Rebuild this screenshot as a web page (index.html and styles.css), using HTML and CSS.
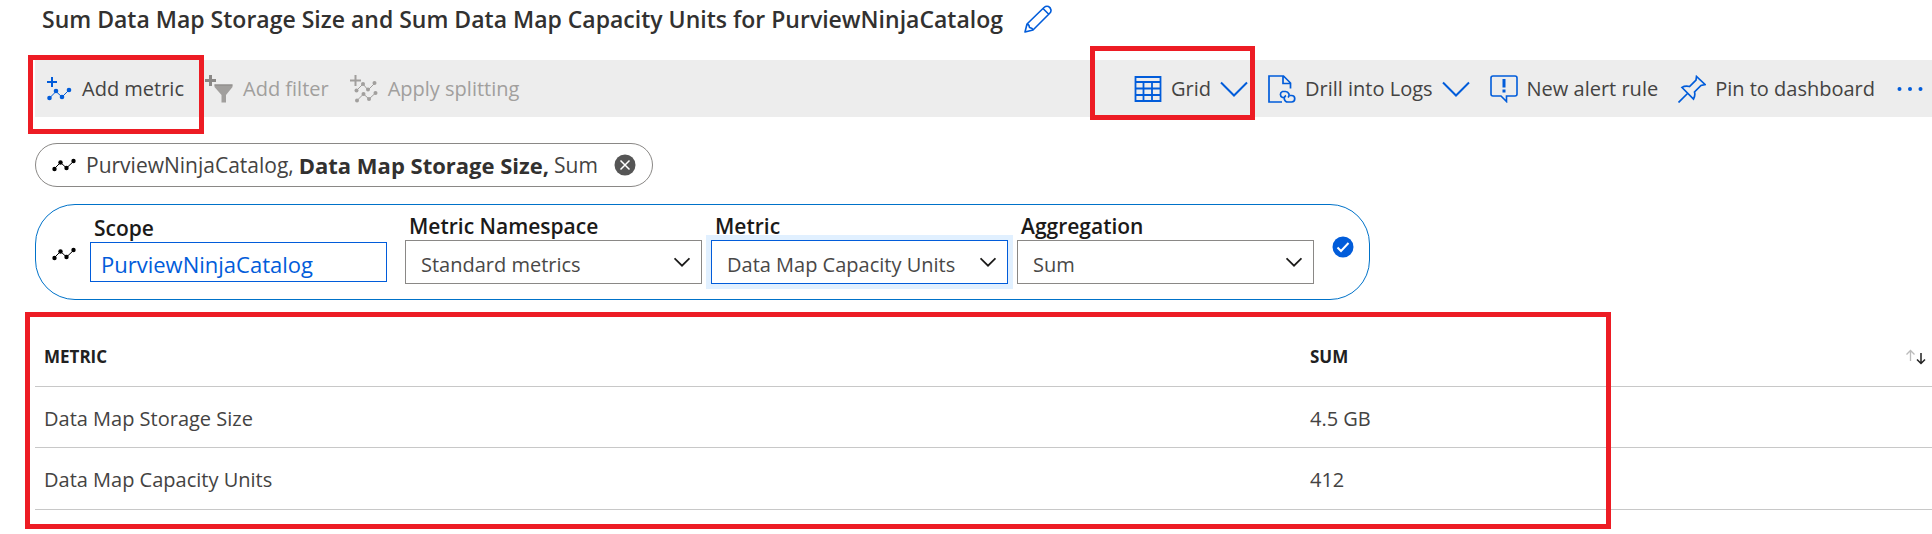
FILE: index.html
```html
<!DOCTYPE html>
<html lang="en">
<head>
<meta charset="utf-8">
<title>Metrics</title>
<link rel="stylesheet" href="styles.css">
</head>
<body>
<svg class="defs" aria-hidden="true">
  <symbol id="line" viewBox="0 0 24 14">
    <path d="M2 11 8.500 4.500 14.500 10 22 3" fill="none" stroke="currentColor" stroke-width="1"/>
    <g fill="currentColor"><circle cx="2.500" cy="11" r="2.200"/><circle cx="8.500" cy="4.500" r="2.200"/><circle cx="14.500" cy="10" r="2.200"/><circle cx="21.500" cy="3" r="2.200"/></g>
  </symbol>
  <symbol id="chev" viewBox="0 0 28 16"><path d="M1 1.500 14 14.500 27 1.500" fill="none" stroke="currentColor"/></symbol>
</svg>
<main class="page">
  <header class="title">
    <h1>Sum Data Map Storage Size and Sum Data Map Capacity Units for PurviewNinjaCatalog</h1>
    <button class="plain blue" aria-label="Edit title">
      <svg width="28" height="28" viewBox="0 0 28 28" fill="none" stroke="currentColor" stroke-width="1.600" stroke-linejoin="round"><path d="M1 27 3 19 20 2.500Q22 .700 24.500 1.500 26.500 2.500 27 5 27.200 7 25.500 8.500L9 25ZM19 3.500 24.500 9M3 19Q5 19 5.500 22.500 8.500 23 9 25"/></svg>
    </button>
  </header>

  <nav class="toolbar" aria-label="Chart actions">
    <div class="group left">
      <button class="plain tool marked mark-add">
        <svg class="blue" width="25" height="24" viewBox="0 0 25 24"><path d="M5 0V10M0 5H10" stroke="currentColor" stroke-width="2"/><path d="M2.500 21 9 14.500 15 20 22 13" fill="none" stroke="currentColor"/><g fill="currentColor"><circle cx="2.500" cy="21" r="2.300"/><circle cx="9" cy="14" r="2.300"/><circle cx="15" cy="20" r="2.300"/><circle cx="22" cy="13" r="2.300"/></g></svg>
        <span>Add metric</span>
      </button>
      <button class="plain tool" disabled>
        <svg width="28" height="28" viewBox="0 0 28 28"><path d="M5.500 0V11M0 5.500H11" stroke="#8a8886" stroke-width="3"/><path d="M9.500 9.500H27.500V12L21 20V27.500H16.500V20L9.500 12Z" fill="currentColor"/><path d="M9.500 10H27.500" stroke="#8a8886"/></svg>
        <span>Add filter</span>
      </button>
      <button class="plain tool" disabled>
        <svg width="28" height="28" viewBox="0 0 28 28"><path d="M5.500 0V11M0 5.500H11" stroke="currentColor" stroke-width="2"/><path d="M7 15 13 9 18 15 25 8M7 25.500 13.500 19 19 24 25.500 18" fill="none" stroke="currentColor"/><g fill="currentColor"><circle cx="6.500" cy="15.500" r="2"/><circle cx="13" cy="9" r="2"/><circle cx="18" cy="14.500" r="2"/><circle cx="24.500" cy="8" r="2"/><circle cx="7" cy="25.500" r="2"/><circle cx="13.500" cy="19" r="2"/><circle cx="19" cy="24" r="2"/><circle cx="25.500" cy="18" r="2"/></g></svg>
        <span>Apply splitting</span>
      </button>
    </div>
    <div class="group right">
      <button class="plain tool marked mark-grid">
        <svg class="blue" width="28" height="28" viewBox="0 0 28 28" fill="none" stroke="currentColor" stroke-width="1.800"><path d="M1.500 2H26.500V26H1.500ZM1.500 7H26.500M1.500 13.500H26.500M1.500 20H26.500M9.500 7V26M18 7V26"/></svg>
        <span>Grid</span>
        <svg class="blue chev" width="28" height="16"><use href="#chev"/></svg>
      </button>
      <button class="plain tool">
        <svg class="blue" width="28" height="28" viewBox="0 0 28 28" fill="none" stroke="currentColor" stroke-width="1.700"><path d="M14 27H1V1H15.500L22.500 8V13.500M15 1V8.500H22.500"/><path d="M16.500 22.500H14.500A3.200 3.200 0 0 1 14.500 16.500H17.500A3.500 3.500 0 0 1 20 22.500M22 20.500H23.500A3.200 3.200 0 0 1 23.500 27H20A3.500 3.500 0 0 1 18 20.500"/></svg>
        <span>Drill into Logs</span>
        <svg class="blue chev" width="28" height="16"><use href="#chev"/></svg>
      </button>
      <button class="plain tool">
        <svg class="blue" width="28" height="28" viewBox="0 0 28 28" fill="none" stroke="currentColor" stroke-width="1.600"><path d="M3 1H25Q27 1 27 3V19Q27 21 25 21H16.500V26.500L11 21H3Q1 21 1 19V3Q1 1 3 1Z"/><path d="M14 4V12.500M14 14.500V17.500" stroke-width="3"/></svg>
        <span>New alert rule</span>
      </button>
      <button class="plain tool">
        <svg class="blue" width="28" height="28" viewBox="0 0 28 28" fill="none" stroke="currentColor" stroke-width="1.700"><path d="M.500 27.500 10 18M4 12.500Q7 10.500 11.500 11.500L18 5 18.500 1.500 27 9.500 23 10.500 16.500 17Q17.500 20.500 15.500 24Z"/></svg>
        <span>Pin to dashboard</span>
      </button>
      <button class="plain blue more" aria-label="More">
        <svg width="26" height="6" viewBox="0 0 26 6" fill="currentColor"><circle cx="2.500" cy="3" r="2"/><circle cx="13" cy="3" r="2"/><circle cx="23.500" cy="3" r="2"/></svg>
      </button>
    </div>
  </nav>

  <section class="chip">
    <svg width="24" height="14"><use href="#line"/></svg>
    <div class="chip-text"><span>PurviewNinjaCatalog,</span><b>Data Map Storage Size,</b><span>Sum</span></div>
    <button class="plain" aria-label="Remove metric">
      <svg width="22" height="22" viewBox="0 0 22 22"><circle cx="11" cy="11" r="10.500" fill="#555"/><path d="M6.500 6.500 15.500 15.500M15.500 6.500 6.500 15.500" stroke="#fff" stroke-width="1.500"/></svg>
    </button>
  </section>

  <form class="editor">
    <svg class="editor-icon" width="24" height="14"><use href="#line"/></svg>
    <div class="field scope"><label for="scope">Scope</label><input id="scope" type="text" value="PurviewNinjaCatalog"></div>
    <div class="field"><label for="ns">Metric Namespace</label>
      <div class="pick"><select id="ns"><option>Standard metrics</option></select><svg width="16" height="10"><use href="#chev"/></svg></div></div>
    <div class="field"><label for="metric">Metric</label>
      <div class="pick"><select id="metric" class="active"><option>Data Map Capacity Units</option></select><svg width="16" height="10"><use href="#chev"/></svg></div></div>
    <div class="field"><label for="agg">Aggregation</label>
      <div class="pick"><select id="agg"><option>Sum</option></select><svg width="16" height="10"><use href="#chev"/></svg></div></div>
    <button class="plain blue apply" type="button" aria-label="Apply">
      <svg width="22" height="22" viewBox="0 0 22 22"><circle cx="11" cy="11" r="10.500" fill="currentColor"/><path d="M5.500 11.500 9 15 16.500 7" fill="none" stroke="#fff" stroke-width="2"/></svg>
    </button>
  </form>

  <section class="results">
    <table>
      <thead><tr><th scope="col">METRIC</th><th scope="col"><div class="sum-head"><span>SUM</span>
        <button class="plain" aria-label="Sort by sum"><svg width="20" height="16" viewBox="0 0 20 16" fill="none"><path d="M4.500 12V1.500M.500 5.500 4.500 1.500 8.500 5.500" stroke="#bbb" stroke-width="1.300"/><path d="M15 4V14.500M11 10.500 15 14.500 19 10.500" stroke="#222" stroke-width="1.500"/></svg></button></div></th></tr></thead>
      <tbody>
        <tr><td>Data Map Storage Size</td><td>4.5 GB</td></tr>
        <tr><td>Data Map Capacity Units</td><td>412</td></tr>
      </tbody>
    </table>
  </section>
</main>
</body>
</html>
```
FILE: styles.css
```css
* { box-sizing: border-box; }
body {
  margin: 0;
  background: #fff;
  color: #444342;
  font: 20px/28px "Segoe UI", "Open Sans", "Noto Sans", sans-serif;
}
.defs { position: absolute; width: 0; height: 0; }
svg { display: block; flex: none; }
.page { padding-left: 35px; }
.plain {
  padding: 0;
  border: 0;
  background: none;
  color: inherit;
  font: inherit;
}
.blue { color: #015cda; }
.chev { stroke-width: 2; }

.title {
  display: flex;
  align-items: center;
  gap: 21px;
  height: 60px;
  padding: 0 0 22px 7px;
}
h1 {
  margin: 0;
  color: #323130;
  font-size: 23px;
  font-weight: 600;
  line-height: 36px;
  white-space: nowrap;
}

.toolbar {
  display: flex;
  justify-content: space-between;
  height: 57px;
  background: #ededed;
}
.group, .tool { display: flex; align-items: center; }
.group.left { gap: 21px; padding-left: 12px; }
.group.right { gap: 20px; padding-right: 9px; }
.tool { position: relative; gap: 9px; height: 100%; white-space: nowrap; }
.left .tool { gap: 10px; }
.tool:disabled { color: #a19f9d; }
.more { margin-left: 2px; }

.marked::after, .results::after {
  content: "";
  position: absolute;
  border: 5px solid #ed1c24;
  pointer-events: none;
}
.mark-add::after { inset: -5px -20px -17px -19px; }
.mark-grid::after { inset: -14px -7px -3px -44px; }

.chip {
  display: flex;
  align-items: center;
  gap: 10px;
  width: fit-content;
  height: 44px;
  margin-top: 26px;
  padding: 0 16px;
  border: 1px solid #8a8886;
  border-radius: 22px;
  font-size: 21px;
  white-space: nowrap;
}
.chip-text { display: flex; gap: 5px; }
.chip svg, .editor-icon { color: #000; }
.chip .plain { margin-left: 6px; }
.chip b { color: #323130; font-size: 22px; }

.editor {
  display: flex;
  align-items: flex-start;
  gap: 9px;
  width: fit-content;
  height: 96px;
  margin-top: 17px;
  padding: 7px 15px 0 16px;
  border: 1px solid #0072c9;
  border-radius: 40px;
}
.editor-icon { margin: 35px 5px 0 0; }
.field { width: 297px; }
.field label {
  display: block;
  padding-left: 4px;
  color: #1b1a19;
  font-size: 21px;
  font-weight: 600;
}
.scope { padding-top: 2px; margin-right: 9px; }
.pick { position: relative; }
.pick svg {
  position: absolute;
  top: 17px;
  right: 12px;
  color: #1b1a19;
  stroke-width: 3;
  pointer-events: none;
}
input, select {
  display: block;
  width: 100%;
  height: 44px;
  margin: 0;
  padding: 6px 15px 0;
  border: 1px solid #8a8886;
  border-radius: 0;
  appearance: none;
  background: #fff;
  color: #494847;
  font: inherit;
}
input {
  height: 40px;
  padding: 3px 10px 0;
  border-color: #015cda;
  color: #015cda;
  font-size: 22px;
}
select.active { border-color: #015cda; box-shadow: 0 0 0 5px #e1f0ff; }
.apply { margin: 24px 0 0 9px; }

.results { position: relative; margin-top: 12px; padding-bottom: 19px; }
.results::after { inset: 0 321px 0 -10px; }
table { width: 100%; border-collapse: collapse; table-layout: fixed; }
th, td { height: 61px; padding: 4px 6px 0 9px; border-bottom: 1px solid #c8c8c8; text-align: left; }
tr:last-child td { height: 62px; }
th { height: 74px; padding-top: 16px; color: #212121; font-size: 17px; }
th:first-child { width: 1266px; }
.sum-head { display: flex; align-items: center; justify-content: space-between; }
```
